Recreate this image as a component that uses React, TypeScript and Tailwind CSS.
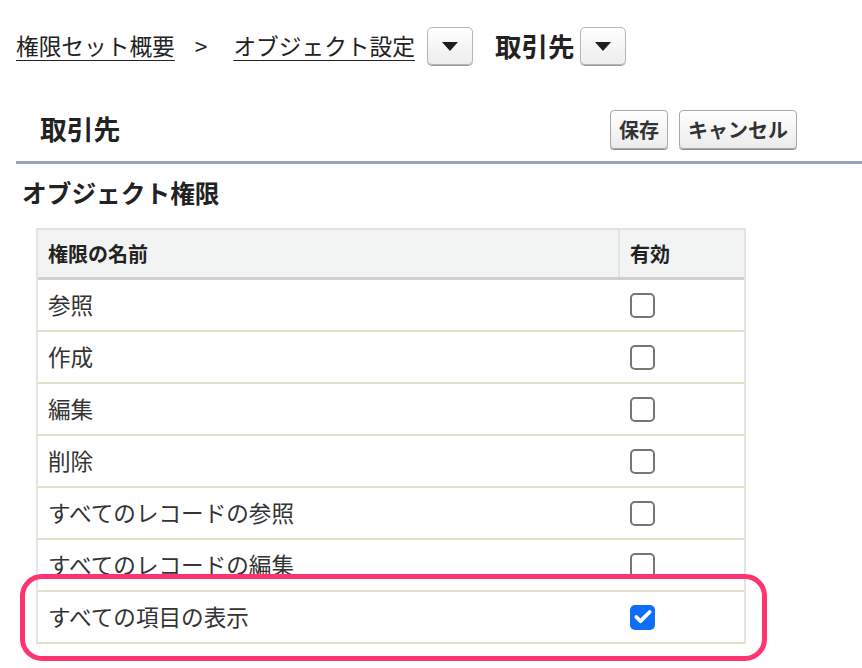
import { Check } from 'lucide-react';

const rows = [
  { label: '参照', checked: false },
  { label: '作成', checked: false },
  { label: '編集', checked: false },
  { label: '削除', checked: false },
  { label: 'すべてのレコードの参照', checked: false },
  { label: 'すべてのレコードの編集', checked: false },
  { label: 'すべての項目の表示', checked: true },
];

const font = { fontFamily: '"Noto Sans CJK JP", "Liberation Sans", sans-serif' };

function DropButton() {
  return (
    <button
      type="button"
      className="flex h-[38px] w-[46px] items-center justify-center rounded-[5px] border border-[#b5b5b5] bg-gradient-to-b from-white to-[#ededed] shadow-[0_1px_0_#9a9a9a]"
    >
      <svg width="16" height="9" viewBox="0 0 16 9">
        <polygon points="0,0 16,0 8,9" fill="#1e1e1e" />
      </svg>
    </button>
  );
}

function Checkbox({ checked }: { checked: boolean }) {
  if (checked) {
    return (
      <div className="flex h-[25px] w-[25px] items-center justify-center rounded-[5px] bg-[#0f6ef7]">
        <Check size={20} strokeWidth={4.5} className="text-white" />
      </div>
    );
  }
  return <div className="h-[25px] w-[25px] rounded-[5px] border-2 border-[#767676] bg-white" />;
}

export default function App() {
  return (
    <div className="min-h-[668px] w-[862px] bg-white text-[#222]" style={font}>
      {/* breadcrumb */}
      <div className="flex items-center pl-[16px] pt-[27px] text-[22.7px] leading-none">
        <a href="#" className="underline decoration-1 underline-offset-[5px]">権限セット概要</a>
        <span className="ml-[20px] mr-[26px]">&gt;</span>
        <a href="#" className="underline decoration-1 underline-offset-[5px]">オブジェクト設定</a>
        <span className="ml-[12px]"><DropButton /></span>
        <span className="ml-[22px] mr-[6px] text-[26.5px] font-bold">取引先</span>
        <DropButton />
      </div>

      {/* page title */}
      <div className="ml-[16px] mt-[45px] flex h-[39px] items-center justify-between pl-[24px] pr-[65px]">
        <h1 className="text-[26.8px] font-bold leading-none">取引先</h1>
        <div className="flex gap-[11px]">
          {['保存', 'キャンセル'].map((t) => (
            <button
              key={t}
              type="button"
              className="h-[39px] rounded-[4px] border border-[#a8a8a8] bg-gradient-to-b from-white to-[#ececec] px-[8px] text-[20px] font-bold leading-none text-[#333] shadow-[0_1px_0_#8e8e8e]"
            >
              {t}
            </button>
          ))}
        </div>
      </div>
      <div className="ml-[16px] mt-[12px] h-[3px] bg-[#97a1b9]" />

      {/* section */}
      <h2 className="ml-[22px] mt-[13px] text-[24.7px] font-bold leading-[30px] text-[#222]">オブジェクト権限</h2>

      <div className="relative ml-[36px] mt-[21px] w-[710px]">
        <div className="border-x-2 border-t-2 border-[#e3e3e3]">
          <div className="flex h-[50px] border-b-[3px] border-[#cfcfcf] bg-[#f2f3f3] text-[20px] font-bold">
            <div className="flex w-[582px] items-center border-r-2 border-[#e3e3e3] pl-[10px]">権限の名前</div>
            <div className="flex flex-1 items-center pl-[10px]">有効</div>
          </div>
          {rows.map((row) => (
            <div key={row.label} className="flex h-[52px] border-b-2 border-[#e2e0c6] text-[22.6px] text-[#333]">
              <div className="flex w-[582px] items-center pl-[10px]">{row.label}</div>
              <div className="flex flex-1 items-center pl-[10px]">
                <Checkbox checked={row.checked} />
              </div>
            </div>
          ))}
        </div>
        <div className="pointer-events-none absolute left-[-16px] top-[346px] h-[87px] w-[747px] rounded-[22px] border-[5px] border-[#ff3370]" />
      </div>
    </div>
  );
}
